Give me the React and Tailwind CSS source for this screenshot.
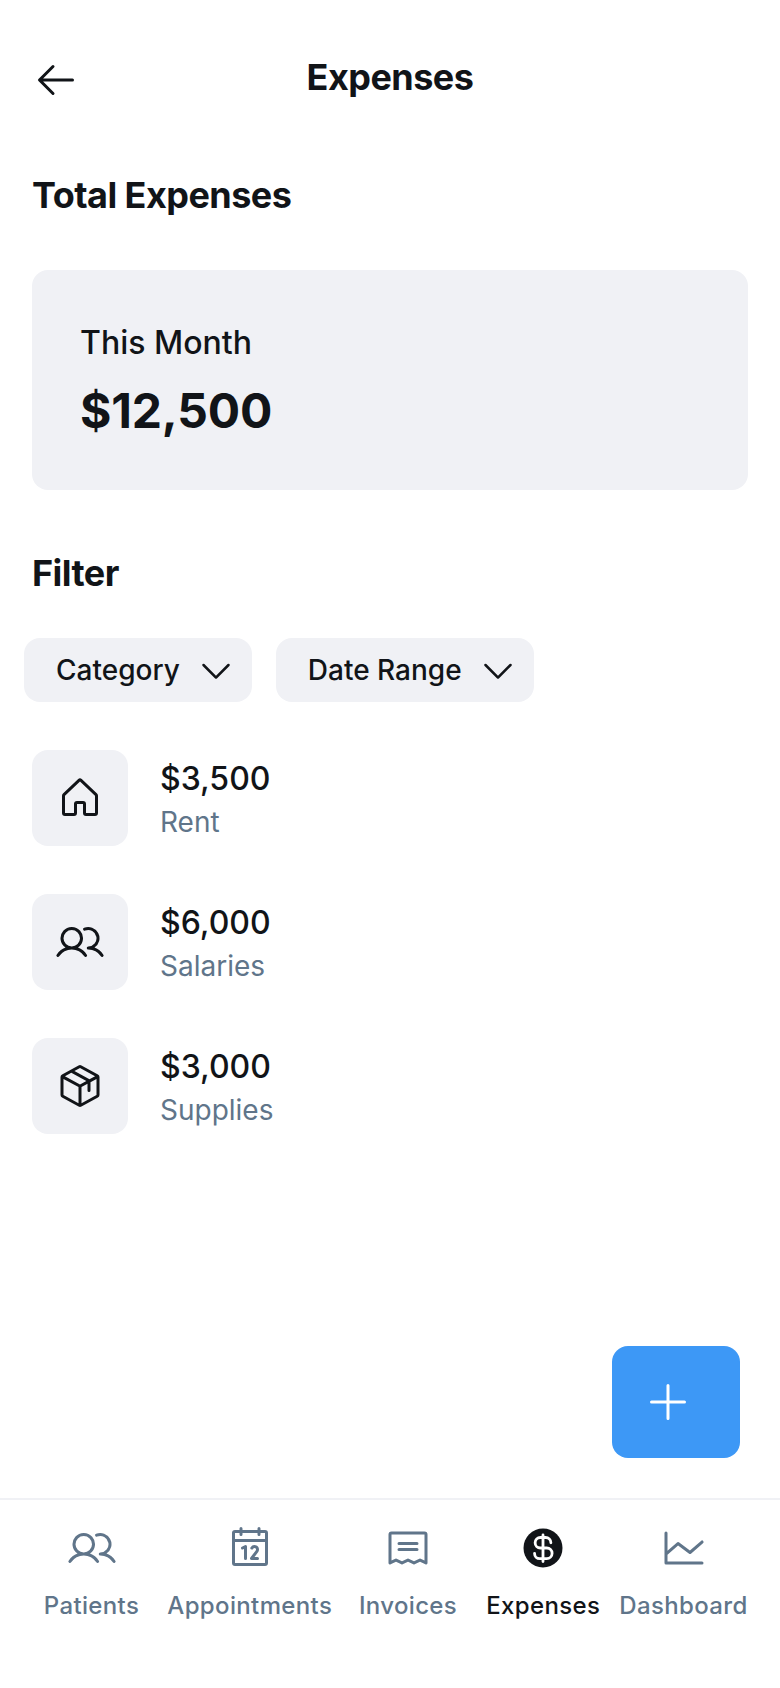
import { PiArrowLeft, PiCaretDown, PiUsers, PiPackage, PiPlus, PiCalendar, PiReceipt, PiChartLine } from 'react-icons/pi'

function HouseIcon({ size }) {
  return (
    <svg width={size} height={size} viewBox="0 0 256 256" fill="currentColor">
      <path d="M218.83,103.77l-80-75.48a1.14,1.14,0,0,1-.11-.11,16,16,0,0,0-21.53,0l-.11.11L37.17,103.77A16,16,0,0,0,32,115.55V208a16,16,0,0,0,16,16H96a16,16,0,0,0,16-16V160h32v48a16,16,0,0,0,16,16h48a16,16,0,0,0,16-16V115.55A16,16,0,0,0,218.83,103.77ZM208,208H160V160a16,16,0,0,0-16-16H112a16,16,0,0,0-16,16v48H48V115.55l.11-.1L128,40l79.9,75.43.11.1Z" />
    </svg>
  )
}

function DollarIcon({ size }) {
  return (
    <svg width={size} height={size} viewBox="0 0 256 256" fill="none">
      <circle cx="128" cy="128" r="104" fill="currentColor" />
      <path d="M128 58V200M170 100A28 28 0 0 0 142 72H114A28 28 0 0 0 114 128H148A28.5 28.5 0 0 1 148 185H111A28 28 0 0 1 83 157" stroke="white" strokeWidth="15" strokeLinecap="round" />
    </svg>
  )
}

const expenses = [
  { amount: '$3,500', label: 'Rent', Icon: HouseIcon },
  { amount: '$6,000', label: 'Salaries', Icon: PiUsers },
  { amount: '$3,000', label: 'Supplies', Icon: PiPackage },
]

const tabs = [
  { label: 'Patients', Icon: PiUsers, box: 'w-[119px]' },
  { label: 'Appointments', Icon: PiCalendar, box: 'w-[165px]' },
  { label: 'Invoices', Icon: PiReceipt, box: 'w-[119px]' },
  { label: 'Expenses', Icon: DollarIcon, box: 'w-[119px]', active: true },
  { label: 'Dashboard', Icon: PiChartLine, box: 'w-[129px]' },
]

export default function App() {
  return (
    <div className="flex h-[1688px] w-[780px] flex-col bg-white font-['Inter',sans-serif] text-[#111418]">
      <header className="flex h-[144px] items-start px-8 pt-8">
        <div className="flex h-24 w-24 items-center"><PiArrowLeft size={48} /></div>
        <h1 className="flex-1 pr-24 pt-[22px] text-center text-[36px] font-bold leading-[46px] tracking-[-0.54px]">Expenses</h1>
      </header>
      <h2 className="px-8 pt-7 text-[36px] font-bold leading-[46px] tracking-[-0.54px]">Total Expenses</h2>
      <section className="mx-8 mt-[52px] h-[220px] rounded-2xl bg-[#f0f1f5] px-12 pt-12">
        <p className="pt-px text-[32px] font-medium leading-[48px]">This Month</p>
        <p className="pt-[14px] text-[48px] font-bold leading-[60px] tracking-[-0.2px]">$12,500</p>
      </section>
      <h2 className="px-8 pt-[60px] text-[36px] font-bold leading-[46px] tracking-[-0.54px]">Filter</h2>
      <div className="mt-[42px] flex gap-6 px-6">
        {['Category', 'Date Range'].map((name) => (
          <button key={name} className="flex h-16 items-center gap-4 rounded-2xl bg-[#f0f1f5] pl-8 pr-4 text-[28px] font-medium">
            {name}<PiCaretDown size={40} />
          </button>
        ))}
      </div>
      <ul className="pt-6">
        {expenses.map(({ amount, label, Icon }) => (
          <li key={label} className="flex h-36 items-center gap-8 px-8">
            <div className="flex size-24 items-center justify-center rounded-2xl bg-[#f0f1f5]"><Icon size={48} /></div>
            <div className="pt-0.5">
              <p className="text-[32px] font-medium leading-[48px]">{amount}</p>
              <p className="-mt-0.5 text-[28px] leading-[42px] text-[#60758a]">{label}</p>
            </div>
          </li>
        ))}
      </ul>
      <div className="mt-auto flex justify-end px-10 pb-10">
        <button className="flex h-28 w-32 items-center rounded-2xl bg-[#3d98f6] pl-8 text-white"><PiPlus size={48} /></button>
      </div>
      <nav className="flex h-[190px] justify-between border-t-2 border-[#f0f1f5] px-8 pt-4">
        {tabs.map(({ label, Icon, box, active }) => (
          <a key={label} className={`flex flex-col items-center gap-2 ${box} ${active ? 'text-[#111418]' : 'text-[#60758a]'}`}>
            <span className="flex h-16 items-center"><Icon size={48} /></span>
            <span className="text-[24px] font-medium leading-9 tracking-[0.36px]">{label}</span>
          </a>
        ))}
      </nav>
    </div>
  )
}
